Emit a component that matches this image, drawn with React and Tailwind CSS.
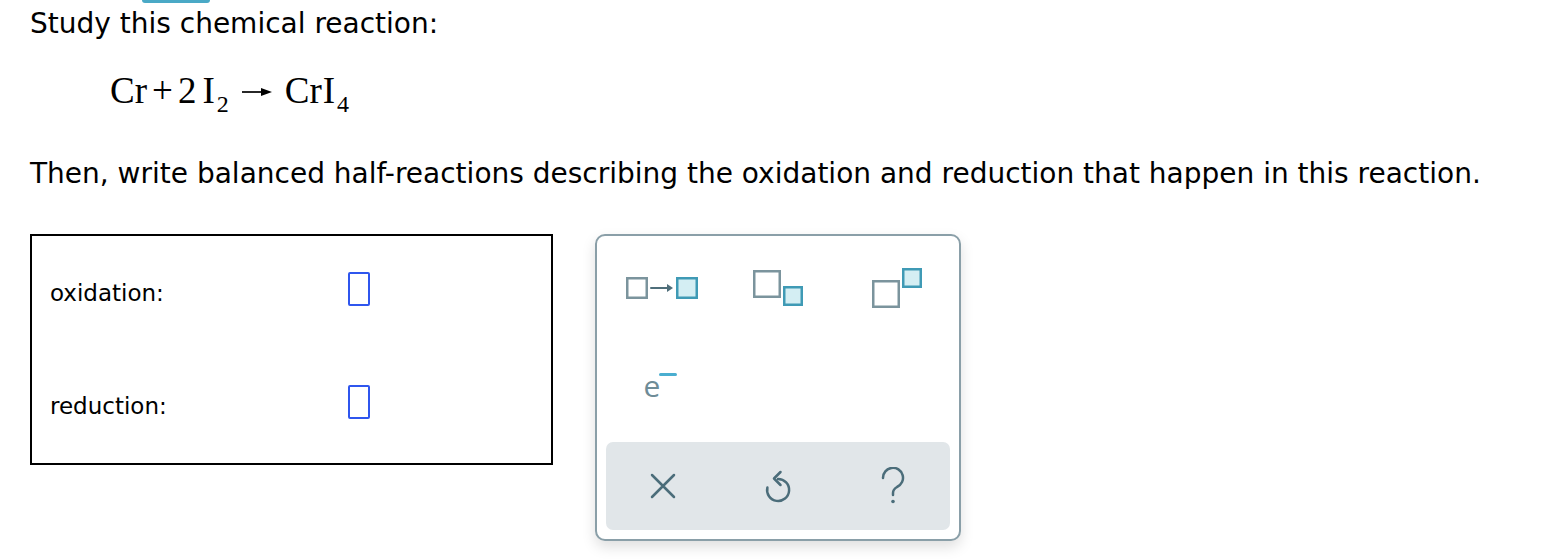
import React from 'react';

function InputSlot() {
  return <span className="block w-[22px] h-[34px] border-2 border-[#2f56ee] rounded-[2px]" />;
}

function ArrowIcon() {
  return (
    <svg width="74" height="22" viewBox="0 0 74 22">
      <rect x="1.25" y="1.25" width="19.5" height="19.5" fill="none" stroke="#7b949d" strokeWidth="2.5" />
      <line x1="25" y1="11" x2="42" y2="11" stroke="#4f6e7a" strokeWidth="2" strokeLinecap="round" />
      <path d="M41 7 L47 11 L41 15 Z" fill="#4f6e7a" />
      <rect x="51.25" y="1.25" width="19.5" height="19.5" fill="#d4eef3" stroke="#3f9ab5" strokeWidth="2.5" />
    </svg>
  );
}

function SubscriptIcon() {
  return (
    <svg width="50" height="36" viewBox="0 0 50 36">
      <rect x="1.25" y="1.25" width="25.5" height="25.5" fill="none" stroke="#7b949d" strokeWidth="2.5" />
      <rect x="31.25" y="17.25" width="17.5" height="17.5" fill="#d4eef3" stroke="#3f9ab5" strokeWidth="2.5" />
    </svg>
  );
}

function SuperscriptIcon() {
  return (
    <svg width="50" height="40" viewBox="0 0 50 40" className="ml-[8px]">
      <rect x="1.25" y="13.25" width="25.5" height="25.5" fill="none" stroke="#7b949d" strokeWidth="2.5" />
      <rect x="31.25" y="1.25" width="17.5" height="17.5" fill="#d4eef3" stroke="#3f9ab5" strokeWidth="2.5" />
    </svg>
  );
}

function ClearIcon() {
  return (
    <svg width="26" height="26" viewBox="0 0 26 26">
      <path d="M2 2 L24 24 M24 2 L2 24" stroke="#4b6d7a" strokeWidth="2.5" strokeLinecap="round" fill="none" />
    </svg>
  );
}

function UndoIcon() {
  return (
    <svg width="28" height="34" viewBox="0 0 28 34">
      <path d="M14 10 A11 11 0 1 1 3.4 18.5" stroke="#4b6d7a" strokeWidth="2.5" strokeLinecap="round" fill="none" />
      <path d="M16.5 3 L10 9.5 L16.5 16" stroke="#4b6d7a" strokeWidth="2.5" strokeLinecap="round" strokeLinejoin="round" fill="none" />
    </svg>
  );
}

function HelpIcon() {
  return (
    <svg width="26" height="38" viewBox="0 0 26 38">
      <path d="M3 11 A10 10 0 1 1 17 20 C14.5 21.5 13 23 13 26 V28" stroke="#4b6d7a" strokeWidth="2.5" strokeLinecap="round" fill="none" />
      <circle cx="13" cy="34.5" r="1.8" fill="#4b6d7a" />
    </svg>
  );
}

export default function App() {
  return (
    <div className="relative w-[1556px] h-[560px] bg-white text-black font-['DejaVu_Sans',Verdana,sans-serif] overflow-hidden">
      {/* tab peeking from above */}
      <div className="absolute left-[142px] top-0 w-[68px] h-[3px] bg-[#4aa9c6] rounded-b-[3px]" />

      <div className="pl-[30px] pt-[8px]">
        <p className="text-[28px] leading-[32px]">Study this chemical reaction:</p>

        {/* equation */}
        <div className="mt-[31px] ml-[80px] h-[40px] leading-[40px] text-[37px] whitespace-nowrap font-['Liberation_Serif','Times_New_Roman',serif]">
          <span>Cr</span>
          <span className="ml-[5px]">+</span>
          <span className="ml-[5px]">2</span>
          <span className="ml-[6px]">I</span>
          <sub className="text-[24px] -bottom-[9px] ml-[2px]">2</sub>
          <svg width="31" height="10" viewBox="0 0 31 10" className="inline-block ml-[13px] mb-[5px]">
            <line x1="0" y1="5" x2="21" y2="5" stroke="#000" strokeWidth="1.7" />
            <path d="M19 1 L30 5 L19 9 Z" fill="#000" />
          </svg>
          <span className="ml-[12px]">Cr</span>
          <span className="ml-[1px]">I</span>
          <sub className="text-[24px] -bottom-[9px] ml-[2px]">4</sub>
        </div>

        <p className="mt-[47px] text-[28px] leading-[32px]">
          Then, write balanced half-reactions describing the oxidation and reduction that happen in this reaction.
        </p>

        <div className="mt-[44px] flex items-start gap-[42px]">
          {/* answer box */}
          <div className="w-[523px] h-[231px] border-2 border-black pl-[18px] pt-[36px] flex flex-col gap-[79px]">
            <div className="flex items-center h-[34px]">
              <span className="w-[298px] text-[23px] leading-[28px] pt-[8px]">oxidation:</span>
              <InputSlot />
            </div>
            <div className="flex items-center h-[34px]">
              <span className="w-[298px] text-[23px] leading-[28px] pt-[8px]">reduction:</span>
              <InputSlot />
            </div>
          </div>

          {/* palette */}
          <div className="w-[366px] h-[307px] border-2 border-[#8a9fa8] rounded-[10px] bg-white shadow-[0_6px_14px_rgba(0,0,0,0.13)] px-[9px] flex flex-col">
            <div className="grid grid-cols-3 h-[104px] items-center justify-items-center">
              <ArrowIcon />
              <SubscriptIcon />
              <SuperscriptIcon />
            </div>
            <div className="grid grid-cols-3 h-[92px] items-center justify-items-center">
              <span className="relative inline-flex items-start font-['Open_Sans',sans-serif] text-[30px] leading-[30px] text-[#6e8c97] -ml-[6px]">
                e
                <span className="block mt-[2px] -ml-[1px] w-[18px] h-[3px] rounded-full bg-[#4aaed0]" />
              </span>
              <span />
              <span />
            </div>
            <div className="mt-[10px] h-[88px] bg-[#e1e6e9] rounded-[7px] grid grid-cols-3 items-center justify-items-center">
              <ClearIcon />
              <UndoIcon />
              <HelpIcon />
            </div>
          </div>
        </div>
      </div>
    </div>
  );
}
